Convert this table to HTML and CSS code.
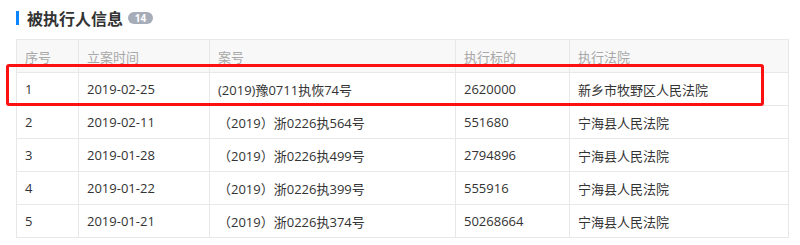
FILE: index.html
```html
<!DOCTYPE html>
<html lang="zh-CN">
<head>
<meta charset="utf-8">
<link rel="stylesheet" href="styles.css">
</head>
<body>
<section class="panel">
  <h2 class="title"><span class="bar"></span><span class="title-text">被执行人信息</span><span class="badge">14</span></h2>
  <div class="table-wrap">
    <table class="grid">
      <colgroup>
        <col class="c1"><col class="c2"><col class="c3"><col class="c4"><col class="c5">
      </colgroup>
      <thead>
        <tr><th>序号</th><th>立案时间</th><th>案号</th><th>执行标的</th><th>执行法院</th></tr>
      </thead>
      <tbody>
        <tr><td>1</td><td>2019-02-25</td><td>(2019)豫0711执恢74号</td><td>2620000</td><td>新乡市牧野区人民法院</td></tr>
        <tr><td>2</td><td>2019-02-11</td><td>（2019）浙0226执564号</td><td>551680</td><td>宁海县人民法院</td></tr>
        <tr><td>3</td><td>2019-01-28</td><td>（2019）浙0226执499号</td><td>2794896</td><td>宁海县人民法院</td></tr>
        <tr><td>4</td><td>2019-01-22</td><td>（2019）浙0226执399号</td><td>555916</td><td>宁海县人民法院</td></tr>
        <tr><td>5</td><td>2019-01-21</td><td>（2019）浙0226执374号</td><td>50268664</td><td>宁海县人民法院</td></tr>
      </tbody>
    </table>
    <div class="highlight"></div>
  </div>
</section>
</body>
</html>
```
FILE: styles.css
```css
html, body {
  margin: 0;
  padding: 0;
  background: #ffffff;
}
body {
  font-family: "Open Sans", "Noto Sans CJK SC", sans-serif;
  color: #333333;
  width: 800px;
  height: 245px;
  overflow: hidden;
}
.panel {
  padding: 0 0 0 16px;
}
.title {
  display: flex;
  align-items: center;
  margin: 0;
  height: 36px;
  padding-top: 0;
  font-size: 16px;
  font-weight: bold;
  font-family: "Noto Sans CJK SC", sans-serif;
  color: #333333;
}
.bar {
  width: 3px;
  height: 14px;
  background: #0a84ff;
  margin-right: 8px;
}
.title-text {
  line-height: 20px;
}
.badge {
  margin-left: 5px;
  width: 25px;
  height: 12px;
  border-radius: 6px;
  background: #a6adb9;
  color: #ffffff;
  font-family: "Open Sans", sans-serif;
  font-size: 10px;
  font-weight: bold;
  line-height: 12px;
  text-align: center;
}
.table-wrap {
  position: relative;
  margin-top: 3px;
}
.grid {
  border-collapse: collapse;
  width: 772px;
  table-layout: fixed;
  font-size: 13px;
}
.c1 { width: 62px; }
.c2 { width: 131px; }
.c3 { width: 246px; }
.c4 { width: 114px; }
.c5 { width: 219px; }
.grid th, .grid td {
  border: 1px solid #e8e8e8;
  height: 32px;
  padding: 0 0 0 8px;
  text-align: left;
  white-space: nowrap;
  box-sizing: border-box;
}
.grid th {
  background: #f8f8f8;
  color: #a8a8a8;
  font-weight: normal;
  height: 33px;
}
.grid td {
  height: 33px;
  color: #333333;
}
.highlight {
  position: absolute;
  left: -10px;
  top: 25px;
  width: 758px;
  height: 42px;
  box-sizing: border-box;
  border: 3px solid #ff1010;
  border-radius: 3px;
}
```
